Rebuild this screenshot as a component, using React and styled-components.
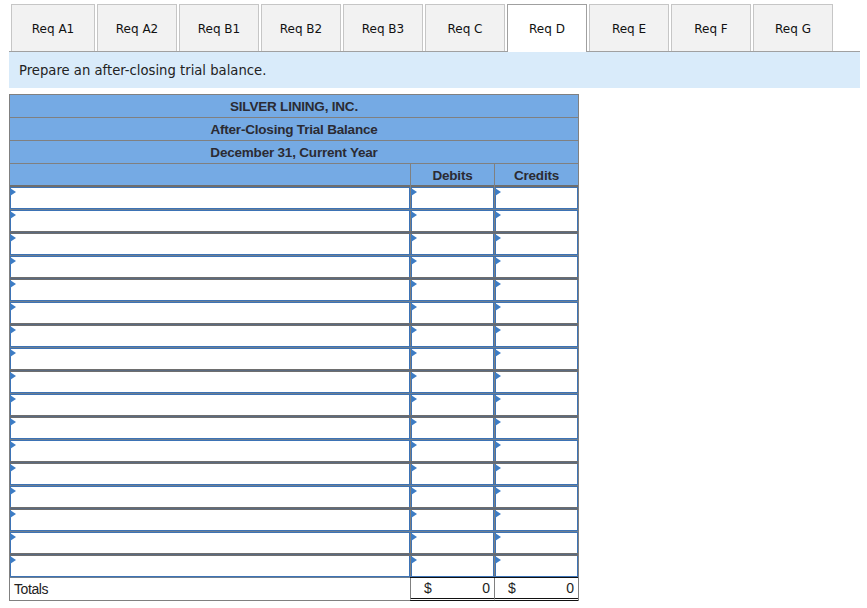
import styled, { createGlobalStyle } from "styled-components";

const GlobalStyle = createGlobalStyle`
  html, body {
    margin: 0;
    padding: 0;
    background: #fff;
  }
`;

const tabs = ["Req A1", "Req A2", "Req B1", "Req B2", "Req B3", "Req C", "Req D", "Req E", "Req F", "Req G"];
const rows = Array.from({ length: 17 }, (_, i) => i);

const App = () => {
  return (
    <Page>
      <GlobalStyle />
      <TabBar>
        {tabs.map((t) => (
          <Tab key={t} $active={t === "Req D"} $wide={t === "Req A1"}>
            {t}
          </Tab>
        ))}
      </TabBar>
      <Prompt>Prepare an after-closing trial balance.</Prompt>
      <Sheet>
        <TitleRow>SILVER LINING, INC.</TitleRow>
        <TitleRow>After-Closing Trial Balance</TitleRow>
        <TitleRow>December 31, Current Year</TitleRow>
        <HeadRow>
          <HeadCell />
          <HeadCell>Debits</HeadCell>
          <HeadCell>Credits</HeadCell>
        </HeadRow>
        {rows.map((i) => (
          <Row key={i}>
            <InputCell $odd={i % 2 === 1} />
            <InputCell $odd={i % 2 === 1} />
            <InputCell $odd={i % 2 === 1} />
          </Row>
        ))}
        <TotalRow>
          <TotalLabel>Totals</TotalLabel>
          <TotalCell>
            <span>$</span>
            <span>0</span>
          </TotalCell>
          <TotalCell>
            <span>$</span>
            <span>0</span>
          </TotalCell>
        </TotalRow>
      </Sheet>
    </Page>
  );
};

const Page = styled.div`
  width: 867px;
  height: 608px;
  padding: 4px 7px 0 9px;
  box-sizing: border-box;
  overflow: hidden;
`;

const TabBar = styled.div`
  display: flex;
  gap: 2px;
  height: 48px;
  padding-left: 2px;
  border-bottom: 1px solid #a0a0a0;
  box-sizing: border-box;
`;

const Tab = styled.div`
  width: ${(p) => (p.$wide ? "84px" : "80px")};
  height: ${(p) => (p.$active ? "48px" : "47px")};
  box-sizing: border-box;
  display: flex;
  align-items: center;
  justify-content: center;
  padding-top: 1px;
  border: 1px solid ${(p) => (p.$active ? "#a0a0a0" : "#c6c6c6")};
  border-bottom: none;
  background: ${(p) => (p.$active ? "#fff" : "#f2f2f2")};
  font: 12px "DejaVu Sans", Verdana, sans-serif;
  color: #111;
`;

const Prompt = styled.div`
  height: 36px;
  display: flex;
  align-items: center;
  padding-left: 10px;
  background: #d9ebfa;
  font: 13.2px "DejaVu Sans", Verdana, sans-serif;
  color: #222;
`;

const Sheet = styled.div`
  width: 570px;
  margin-top: 6px;
  display: flex;
  flex-direction: column;
  font-family: "Liberation Sans", Arial, sans-serif;
  font-size: 13.5px;
  letter-spacing: -0.2px;
  border-left: 1px solid #808080;
  border-right: 1px solid #808080;
  border-top: 1px solid #808080;
  box-sizing: border-box;
`;

const TitleRow = styled.div`
  height: 23px;
  box-sizing: border-box;
  display: flex;
  align-items: center;
  justify-content: center;
  background: #75aae4;
  border-bottom: 1px solid #808080;
  font-weight: 700;
  color: #2b2b33;
`;

const Row = styled.div`
  display: grid;
  grid-template-columns: 400px 84px 84px;
  height: 23px;
`;

const HeadRow = styled(Row)`
  height: 24px;
`;

const TotalRow = styled(Row)`
  margin-top: -1px;
`;

const HeadCell = styled.div`
  box-sizing: border-box;
  display: flex;
  align-items: center;
  justify-content: center;
  padding-bottom: 2px;
  background: #75aae4;
  border-left: 1px solid #808080;
  box-shadow: inset 0 -1px 0 #3d73b5, inset 0 -3px 0 #6e6e6e;
  font-weight: 700;
  color: #2b2b33;
  &:first-child {
    border-left: none;
  }
`;

const InputCell = styled.div`
  --line-outer: ${(p) => (p.$odd ? "#6e6e6e" : "#3d73b5")};
  --line-mid: ${(p) => (p.$odd ? "#5a6a80" : "#6f7f90")};
  position: relative;
  box-sizing: border-box;
  background: #fff;
  box-shadow: inset 0 -1px 0 var(--line-outer), inset 0 -2px 0 var(--line-mid), inset 0 -3px 0 var(--line-outer),
    inset 1px 0 0 #808080, inset 2px 0 0 #3d73b5, inset -1px 0 0 #3d73b5;
  &:first-child {
    box-shadow: inset 0 -1px 0 var(--line-outer), inset 0 -2px 0 var(--line-mid), inset 0 -3px 0 var(--line-outer),
      inset 1px 0 0 #3d73b5, inset -1px 0 0 #3d73b5;
  }
  &::before {
    content: "";
    position: absolute;
    left: 1px;
    top: 0;
    border-left: 6px solid #3d7cc4;
    border-top: 4px solid transparent;
    border-bottom: 4px solid transparent;
  }
  &:first-child::before {
    left: 0;
  }
`;

const TotalLabel = styled.div`
  position: relative;
  box-sizing: border-box;
  display: flex;
  align-items: center;
  padding-left: 4px;
  background: #fff;
  border-bottom: 1px solid #808080;
  font-size: 14px;
  letter-spacing: -0.4px;
  color: #222;
`;

const TotalCell = styled.div`
  position: relative;
  box-sizing: border-box;
  display: flex;
  align-items: center;
  justify-content: space-between;
  padding: 0 4px 0 13px;
  background: #fff;
  border-left: 1px solid #808080;
  border-bottom: 3px double #111;
  box-shadow: 0 -1px 0 #111;
  font-size: 14px;
  letter-spacing: 0;
  color: #222;
`;

export default App;
